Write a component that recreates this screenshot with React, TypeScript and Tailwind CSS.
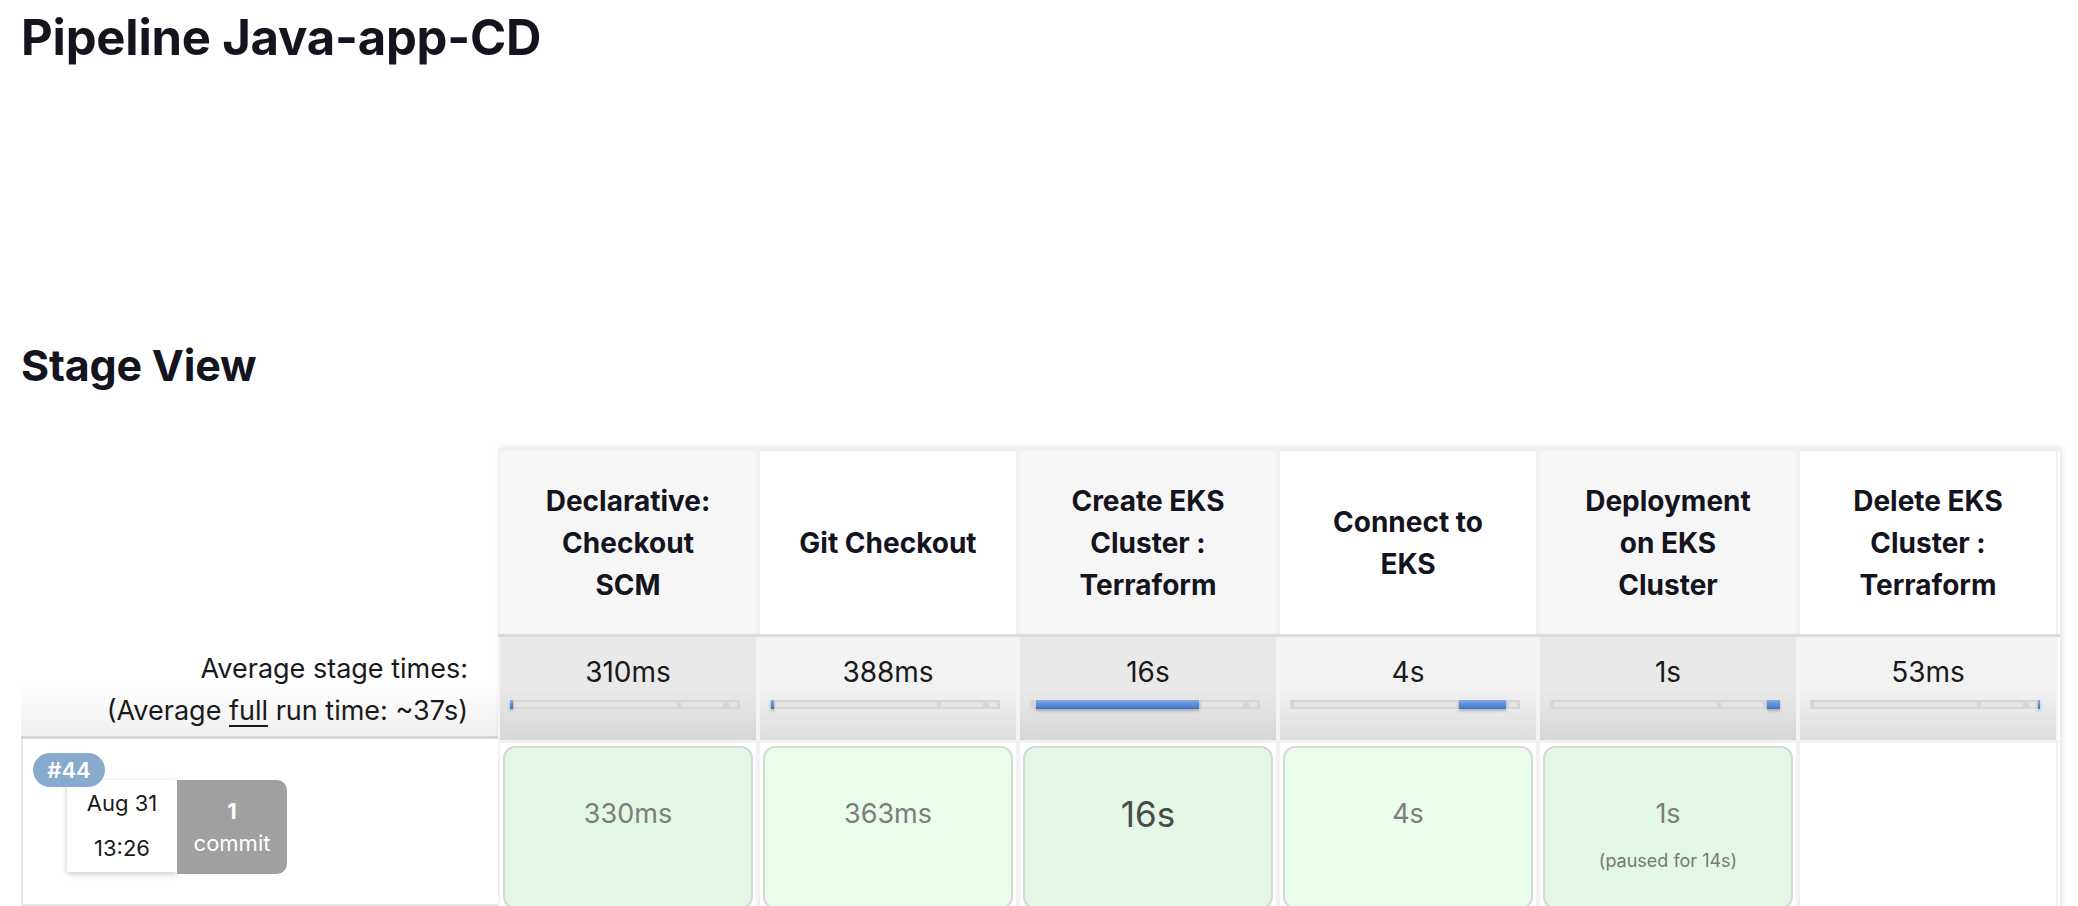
import React from 'react';

type Stage = {
  lines: string[];
  avg: string;
  blue: [number, number];
  run?: { time: string; note?: string; longest?: boolean };
};

const stages: Stage[] = [
  { lines: ['Declarative:', 'Checkout', 'SCM'], avg: '310ms', blue: [0, 3], run: { time: '330ms' } },
  { lines: ['Git Checkout'], avg: '388ms', blue: [1, 4], run: { time: '363ms' } },
  { lines: ['Create EKS', 'Cluster :', 'Terraform'], avg: '16s', blue: [6, 169], run: { time: '16s', longest: true } },
  { lines: ['Connect to', 'EKS'], avg: '4s', blue: [169, 216], run: { time: '4s' } },
  { lines: ['Deployment', 'on EKS', 'Cluster'], avg: '1s', blue: [217, 230], run: { time: '1s', note: '(paused for 14s)' } },
  { lines: ['Delete EKS', 'Cluster :', 'Terraform'], avg: '53ms', blue: [228, 230] },
];

function TimeBar({ blue }: { blue: [number, number] }) {
  return (
    <div className="relative ml-[10px] mt-[11px] h-[9px] w-[230px] bg-[#d6d6d6]">
      {/* lighter inner segments of the track */}
      <div className="absolute left-[4px] top-[2px] h-[5px] w-[163px] bg-[#e4e4e4]" />
      <div className="absolute left-[171px] top-[2px] h-[5px] w-[42px] bg-[#e4e4e4]" />
      <div className="absolute left-[219px] top-[2px] h-[5px] w-[8px] bg-[#e4e4e4]" />
      <div
        className="absolute top-0 h-[9px] bg-gradient-to-b from-[#7fa8e2] via-[#5b8fd9] to-[#3f74c6] shadow-[0_2px_3px_rgba(0,0,0,0.25)]"
        style={{ left: blue[0], width: blue[1] - blue[0] }}
      />
    </div>
  );
}

export default function App() {
  return (
    <div className="min-h-[906px] bg-white pl-[21px] text-[#14141f]" style={{ fontFamily: 'Inter, "Noto Sans", sans-serif' }}>
      <h1 className="pt-[9px] text-[49px] font-bold leading-[58px] tracking-[-0.2px]">Pipeline Java-app-CD</h1>

      <h2 className="mt-[273px] text-[43px] font-bold leading-[50px] tracking-[-0.2px]">Stage View</h2>

      <div className="mt-[58px] flex">
        {/* left label column */}
        <div className="flex w-[477px] flex-col">
          <div className="h-[186px]" />
          <div className="h-[105px] border-b-[3px] border-[#d6d6d6] bg-gradient-to-b from-white via-white to-[#efefef] pr-[30px] pt-[14px] text-right text-[27px] leading-[42px] text-[#1a1a1a]">
            <div>Average stage times:</div>
            <div>
              (Average <span className="underline underline-offset-[5px]">full</span> run time: ~37s)
            </div>
          </div>
          <div className="relative h-[167px] border-b-2 border-l-2 border-[#e6e6e6] bg-white">
            <div className="absolute left-[10px] top-[14px] z-10 flex h-[34px] w-[72px] items-center justify-center rounded-full bg-[#87aacd] text-[22px] font-semibold text-white">
              #44
            </div>
            <div className="ml-[44px] mt-[41px] flex">
              <div className="flex h-[92px] w-[110px] flex-col items-center justify-center gap-[18px] bg-white text-[22px] leading-[27px] text-[#1a1a1a] shadow-[0_2px_6px_rgba(0,0,0,0.22)]">
                <span>Aug 31</span>
                <span>13:26</span>
              </div>
              <div className="flex h-[94px] w-[110px] flex-col items-center justify-center rounded-r-[10px] bg-[#a0a0a0] text-[22px] leading-[32px] text-white">
                <span className="font-bold">1</span>
                <span>commit</span>
              </div>
            </div>
          </div>
        </div>

        {/* stage block */}
        <div className="flex w-[1562px] flex-col border-t-[3px] border-[#eeeeee] shadow-[2px_0_6px_rgba(0,0,0,0.12)]">
          <div className="flex h-[183px]">
            {stages.map((s, i) => (
              <div
                key={i}
                className={`flex w-[260px] flex-col items-center justify-center border-x-[2px] border-[#f0f0f0] text-center text-[28px] font-bold leading-[42px] ${
                  i % 2 === 0 ? 'bg-[#f6f6f6]' : 'bg-white'
                }`}
              >
                {s.lines.map((l) => (
                  <div key={l}>{l}</div>
                ))}
              </div>
            ))}
          </div>

          <div className="flex h-[106px] border-t-[3px] border-[#dcdcdc]">
            {stages.map((s, i) => (
              <div
                key={i}
                className={`w-[260px] border-x-[2px] border-[#f4f4f4] pt-[18px] ${
                  i % 2 === 0
                    ? 'bg-gradient-to-b from-[#e9e9e9] via-[#e9e9e9] to-[#d7d7d7]'
                    : 'bg-gradient-to-b from-[#f2f2f2] via-[#f2f2f2] to-[#dddddd]'
                }`}
              >
                <div className="text-center text-[28px] leading-[34px] text-[#1a1a1a]">{s.avg}</div>
                <TimeBar blue={s.blue} />
              </div>
            ))}
          </div>

          <div className="flex h-[169px] border-t-[3px] border-[#f2f2f2]">
            {stages.map((s, i) => (
              <div key={i} className="w-[260px] border-x-[2px] border-[#f2f2f2] bg-white px-[3px] pt-[3px]">
                {s.run && (
                  <div
                    className={`flex h-[163px] flex-col items-center rounded-[12px] border-2 border-[#d8d8d8] pt-[47px] ${
                      i % 2 === 0 ? 'bg-[#e2f7e5]' : 'bg-[#e9fdea]'
                    }`}
                  >
                    <div
                      className={
                        s.run.longest
                          ? 'text-[35px] leading-[38px] text-[#4a4a4a]'
                          : 'text-[27px] leading-[38px] text-[#7d7d7d]'
                      }
                    >
                      {s.run.time}
                    </div>
                    {s.run.note && <div className="mt-[17px] text-[18px] leading-[22px] text-[#777777]">{s.run.note}</div>}
                  </div>
                )}
              </div>
            ))}
          </div>
        </div>
      </div>
    </div>
  );
}
